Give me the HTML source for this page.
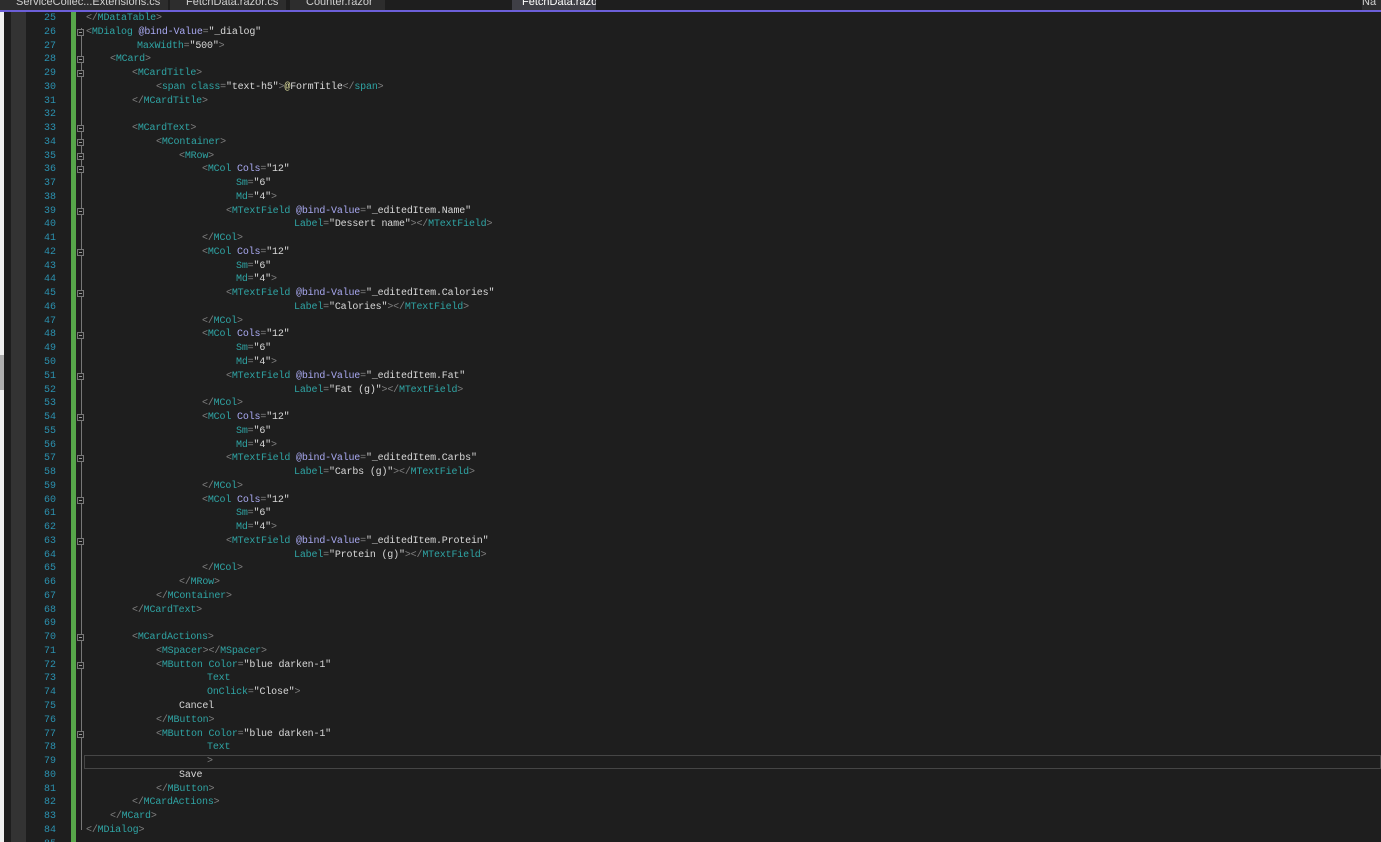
<!DOCTYPE html>
<html><head><meta charset="utf-8"><style>
html,body{margin:0;width:1381px;height:842px;overflow:hidden}
body{background:#1e1e1e;position:relative;font-family:"Liberation Mono",monospace;font-size:10px}
.a{position:absolute}
.l{position:absolute;white-space:pre;height:14px;line-height:14px;color:#d8d8d8;letter-spacing:-0.17px}
.n{position:absolute;left:26px;width:30px;text-align:right;color:#2b91af;white-space:pre;line-height:14px}
.p{color:#808080}.t{color:#2fa4a4}.b{color:#a8a8f0}.s{color:#dcdcdc}
.tab{position:absolute;top:0;height:10px;background:#2d2d2d;color:#d0d0d0;font-family:"Liberation Sans",sans-serif;font-size:11px;line-height:5px;overflow:hidden;padding-left:16px;white-space:nowrap}
.f{position:absolute;left:77px;width:7px;height:7px;border:1px solid #777;box-sizing:border-box;background:#1e1e1e}
.f:after{content:"";position:absolute;left:1px;top:2px;width:3px;height:1px;background:#999}
</style></head><body>
<div class="a" style="left:0;top:0;width:4px;height:842px;background:#f0f0f0"></div>
<div class="a" style="left:0;top:355px;width:4px;height:35px;background:#b0b0b0"></div>
<div class="a" style="left:11px;top:12px;width:15px;height:830px;background:#333"></div>
<div class="a" style="left:0;top:0;width:1381px;height:10px;background:#1e1e1e"></div>
<div class="tab" style="left:0;width:152px">ServiceCollec...Extensions.cs</div>
<div class="tab" style="left:170px;width:100px">FetchData.razor.cs</div>
<div class="tab" style="left:290px;width:79px">Counter.razor</div>
<div class="tab" style="left:512px;background:#3f3f46;color:#fff;padding-left:10px;width:74px">FetchData.razor</div>
<div class="tab" style="left:1362px;width:19px;padding-left:0">Na</div>
<div class="a" style="left:0;top:10px;width:1381px;height:2px;background:#6c5fd8"></div>
<div class="a" style="left:71px;top:12px;width:5px;height:830px;background:#57a64a"></div>
<div class="a" style="left:81px;top:28px;width:1px;height:802px;background:#777"></div>
<div class="a" style="left:84px;top:755px;width:1297px;height:14px;border:1px solid #464646;box-sizing:border-box"></div>

<div style="position:absolute;left:0;top:12px">
<div class="n" style="top:0">25</div><div class="l" style="top:0;left:86px"><span class="p">&lt;/</span><span class="t">MDataTable</span><span class="p">&gt;</span></div>
<div class="n" style="top:13.76px">26</div><div class="l" style="top:13.76px;left:86px"><span class="p">&lt;</span><span class="t">MDialog</span> <span class="b">@bind-Value</span><span class="p">=</span>"_dialog"</div>
<div class="n" style="top:27.52px">27</div><div class="l" style="top:27.52px;left:137px"><span class="t">MaxWidth</span><span class="p">=</span>"500"<span class="p">&gt;</span></div>
<div class="n" style="top:41.28px">28</div><div class="l" style="top:41.28px;left:110px"><span class="p">&lt;</span><span class="t">MCard</span><span class="p">&gt;</span></div>
<div class="n" style="top:55.04px">29</div><div class="l" style="top:55.04px;left:132px"><span class="p">&lt;</span><span class="t">MCardTitle</span><span class="p">&gt;</span></div>
<div class="n" style="top:68.8px">30</div><div class="l" style="top:68.8px;left:156px"><span class="p">&lt;</span><span class="t">span</span> <span class="t">class</span><span class="p">=</span>"text-h5"<span class="p">&gt;</span><span style="color:#e0e0a0">@</span>FormTitle<span class="p">&lt;/</span><span class="t">span</span><span class="p">&gt;</span></div>
<div class="n" style="top:82.56px">31</div><div class="l" style="top:82.56px;left:132px"><span class="p">&lt;/</span><span class="t">MCardTitle</span><span class="p">&gt;</span></div>
<div class="n" style="top:96.32px">32</div>
<div class="n" style="top:110.08px">33</div><div class="l" style="top:110.08px;left:132px"><span class="p">&lt;</span><span class="t">MCardText</span><span class="p">&gt;</span></div>
<div class="n" style="top:123.84px">34</div><div class="l" style="top:123.84px;left:156px"><span class="p">&lt;</span><span class="t">MContainer</span><span class="p">&gt;</span></div>
<div class="n" style="top:137.6px">35</div><div class="l" style="top:137.6px;left:179px"><span class="p">&lt;</span><span class="t">MRow</span><span class="p">&gt;</span></div>

<div class="n" style="top:151.36px">36</div><div class="l" style="top:151.36px;left:202px"><span class="p">&lt;</span><span class="t">MCol</span> <span class="b">Cols</span><span class="p">=</span>"12"</div>
<div class="n" style="top:165.12px">37</div><div class="l" style="top:165.12px;left:236px"><span class="t">Sm</span><span class="p">=</span>"6"</div>
<div class="n" style="top:178.88px">38</div><div class="l" style="top:178.88px;left:236px"><span class="t">Md</span><span class="p">=</span>"4"<span class="p">&gt;</span></div>
<div class="n" style="top:192.64px">39</div><div class="l" style="top:192.64px;left:226px"><span class="p">&lt;</span><span class="t">MTextField</span> <span class="b">@bind-Value</span><span class="p">=</span>"_editedItem.Name"</div>
<div class="n" style="top:206.4px">40</div><div class="l" style="top:206.4px;left:294px"><span class="t">Label</span><span class="p">=</span>"Dessert name"<span class="p">&gt;&lt;/</span><span class="t">MTextField</span><span class="p">&gt;</span></div>
<div class="n" style="top:220.16px">41</div><div class="l" style="top:220.16px;left:202px"><span class="p">&lt;/</span><span class="t">MCol</span><span class="p">&gt;</span></div>

<div class="n" style="top:233.92px">42</div><div class="l" style="top:233.92px;left:202px"><span class="p">&lt;</span><span class="t">MCol</span> <span class="b">Cols</span><span class="p">=</span>"12"</div>
<div class="n" style="top:247.68px">43</div><div class="l" style="top:247.68px;left:236px"><span class="t">Sm</span><span class="p">=</span>"6"</div>
<div class="n" style="top:261.44px">44</div><div class="l" style="top:261.44px;left:236px"><span class="t">Md</span><span class="p">=</span>"4"<span class="p">&gt;</span></div>
<div class="n" style="top:275.2px">45</div><div class="l" style="top:275.2px;left:226px"><span class="p">&lt;</span><span class="t">MTextField</span> <span class="b">@bind-Value</span><span class="p">=</span>"_editedItem.Calories"</div>
<div class="n" style="top:288.96px">46</div><div class="l" style="top:288.96px;left:294px"><span class="t">Label</span><span class="p">=</span>"Calories"<span class="p">&gt;&lt;/</span><span class="t">MTextField</span><span class="p">&gt;</span></div>
<div class="n" style="top:302.72px">47</div><div class="l" style="top:302.72px;left:202px"><span class="p">&lt;/</span><span class="t">MCol</span><span class="p">&gt;</span></div>

<div class="n" style="top:316.48px">48</div><div class="l" style="top:316.48px;left:202px"><span class="p">&lt;</span><span class="t">MCol</span> <span class="b">Cols</span><span class="p">=</span>"12"</div>
<div class="n" style="top:330.24px">49</div><div class="l" style="top:330.24px;left:236px"><span class="t">Sm</span><span class="p">=</span>"6"</div>
<div class="n" style="top:344px">50</div><div class="l" style="top:344px;left:236px"><span class="t">Md</span><span class="p">=</span>"4"<span class="p">&gt;</span></div>
<div class="n" style="top:357.76px">51</div><div class="l" style="top:357.76px;left:226px"><span class="p">&lt;</span><span class="t">MTextField</span> <span class="b">@bind-Value</span><span class="p">=</span>"_editedItem.Fat"</div>
<div class="n" style="top:371.52px">52</div><div class="l" style="top:371.52px;left:294px"><span class="t">Label</span><span class="p">=</span>"Fat (g)"<span class="p">&gt;&lt;/</span><span class="t">MTextField</span><span class="p">&gt;</span></div>
<div class="n" style="top:385.28px">53</div><div class="l" style="top:385.28px;left:202px"><span class="p">&lt;/</span><span class="t">MCol</span><span class="p">&gt;</span></div>

<div class="n" style="top:399.04px">54</div><div class="l" style="top:399.04px;left:202px"><span class="p">&lt;</span><span class="t">MCol</span> <span class="b">Cols</span><span class="p">=</span>"12"</div>
<div class="n" style="top:412.8px">55</div><div class="l" style="top:412.8px;left:236px"><span class="t">Sm</span><span class="p">=</span>"6"</div>
<div class="n" style="top:426.56px">56</div><div class="l" style="top:426.56px;left:236px"><span class="t">Md</span><span class="p">=</span>"4"<span class="p">&gt;</span></div>
<div class="n" style="top:440.32px">57</div><div class="l" style="top:440.32px;left:226px"><span class="p">&lt;</span><span class="t">MTextField</span> <span class="b">@bind-Value</span><span class="p">=</span>"_editedItem.Carbs"</div>
<div class="n" style="top:454.08px">58</div><div class="l" style="top:454.08px;left:294px"><span class="t">Label</span><span class="p">=</span>"Carbs (g)"<span class="p">&gt;&lt;/</span><span class="t">MTextField</span><span class="p">&gt;</span></div>
<div class="n" style="top:467.84px">59</div><div class="l" style="top:467.84px;left:202px"><span class="p">&lt;/</span><span class="t">MCol</span><span class="p">&gt;</span></div>

<div class="n" style="top:481.6px">60</div><div class="l" style="top:481.6px;left:202px"><span class="p">&lt;</span><span class="t">MCol</span> <span class="b">Cols</span><span class="p">=</span>"12"</div>
<div class="n" style="top:495.36px">61</div><div class="l" style="top:495.36px;left:236px"><span class="t">Sm</span><span class="p">=</span>"6"</div>
<div class="n" style="top:509.12px">62</div><div class="l" style="top:509.12px;left:236px"><span class="t">Md</span><span class="p">=</span>"4"<span class="p">&gt;</span></div>
<div class="n" style="top:522.88px">63</div><div class="l" style="top:522.88px;left:226px"><span class="p">&lt;</span><span class="t">MTextField</span> <span class="b">@bind-Value</span><span class="p">=</span>"_editedItem.Protein"</div>
<div class="n" style="top:536.64px">64</div><div class="l" style="top:536.64px;left:294px"><span class="t">Label</span><span class="p">=</span>"Protein (g)"<span class="p">&gt;&lt;/</span><span class="t">MTextField</span><span class="p">&gt;</span></div>
<div class="n" style="top:550.4px">65</div><div class="l" style="top:550.4px;left:202px"><span class="p">&lt;/</span><span class="t">MCol</span><span class="p">&gt;</span></div>

<div class="n" style="top:564.16px">66</div><div class="l" style="top:564.16px;left:179px"><span class="p">&lt;/</span><span class="t">MRow</span><span class="p">&gt;</span></div>
<div class="n" style="top:577.92px">67</div><div class="l" style="top:577.92px;left:156px"><span class="p">&lt;/</span><span class="t">MContainer</span><span class="p">&gt;</span></div>
<div class="n" style="top:591.68px">68</div><div class="l" style="top:591.68px;left:132px"><span class="p">&lt;/</span><span class="t">MCardText</span><span class="p">&gt;</span></div>
<div class="n" style="top:605.44px">69</div>
<div class="n" style="top:619.2px">70</div><div class="l" style="top:619.2px;left:132px"><span class="p">&lt;</span><span class="t">MCardActions</span><span class="p">&gt;</span></div>
<div class="n" style="top:632.96px">71</div><div class="l" style="top:632.96px;left:156px"><span class="p">&lt;</span><span class="t">MSpacer</span><span class="p">&gt;&lt;/</span><span class="t">MSpacer</span><span class="p">&gt;</span></div>
<div class="n" style="top:646.72px">72</div><div class="l" style="top:646.72px;left:156px"><span class="p">&lt;</span><span class="t">MButton</span> <span class="t">Color</span><span class="p">=</span>"blue darken-1"</div>
<div class="n" style="top:660.48px">73</div><div class="l" style="top:660.48px;left:207px"><span class="t">Text</span></div>
<div class="n" style="top:674.24px">74</div><div class="l" style="top:674.24px;left:207px"><span class="t">OnClick</span><span class="p">=</span>"Close"<span class="p">&gt;</span></div>
<div class="n" style="top:688px">75</div><div class="l" style="top:688px;left:179px">Cancel</div>
<div class="n" style="top:701.76px">76</div><div class="l" style="top:701.76px;left:156px"><span class="p">&lt;/</span><span class="t">MButton</span><span class="p">&gt;</span></div>
<div class="n" style="top:715.52px">77</div><div class="l" style="top:715.52px;left:156px"><span class="p">&lt;</span><span class="t">MButton</span> <span class="t">Color</span><span class="p">=</span>"blue darken-1"</div>
<div class="n" style="top:729.28px">78</div><div class="l" style="top:729.28px;left:207px"><span class="t">Text</span></div>
<div class="n" style="top:743.04px">79</div><div class="l" style="top:743.04px;left:207px"><span class="p">&gt;</span></div>
<div class="n" style="top:756.8px">80</div><div class="l" style="top:756.8px;left:179px">Save</div>
<div class="n" style="top:770.56px">81</div><div class="l" style="top:770.56px;left:156px"><span class="p">&lt;/</span><span class="t">MButton</span><span class="p">&gt;</span></div>
<div class="n" style="top:784.32px">82</div><div class="l" style="top:784.32px;left:132px"><span class="p">&lt;/</span><span class="t">MCardActions</span><span class="p">&gt;</span></div>
<div class="n" style="top:798.08px">83</div><div class="l" style="top:798.08px;left:110px"><span class="p">&lt;/</span><span class="t">MCard</span><span class="p">&gt;</span></div>
<div class="n" style="top:811.84px">84</div><div class="l" style="top:811.84px;left:86px"><span class="p">&lt;/</span><span class="t">MDialog</span><span class="p">&gt;</span></div>
<div class="n" style="top:825.6px">85</div>

<div class="f" style="top:17px"></div><div class="f" style="top:44px"></div><div class="f" style="top:58px"></div>
<div class="f" style="top:113px"></div><div class="f" style="top:127px"></div><div class="f" style="top:141px"></div>
<div class="f" style="top:154px"></div><div class="f" style="top:196px"></div><div class="f" style="top:237px"></div>
<div class="f" style="top:278px"></div><div class="f" style="top:320px"></div><div class="f" style="top:361px"></div>
<div class="f" style="top:402px"></div><div class="f" style="top:443px"></div><div class="f" style="top:485px"></div>
<div class="f" style="top:526px"></div><div class="f" style="top:622px"></div><div class="f" style="top:650px"></div>
<div class="f" style="top:719px"></div>
</div>
</body></html>
